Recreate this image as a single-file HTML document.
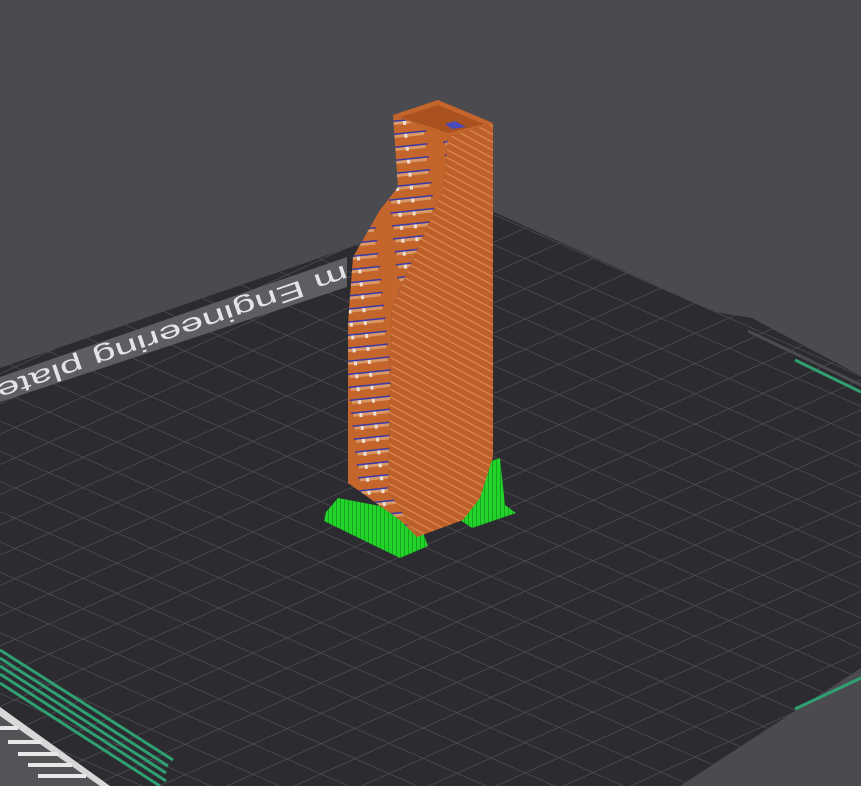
<!DOCTYPE html>
<html><head><meta charset="utf-8"><style>
html,body{margin:0;padding:0;background:#4b4a4f;overflow:hidden;width:861px;height:786px}
svg{display:block}
</style></head><body>
<svg width="861" height="786" viewBox="0 0 861 786" xmlns="http://www.w3.org/2000/svg">
<defs>
<pattern id="grid" width="20" height="20" patternUnits="userSpaceOnUse">
<path d="M0 0H20M0 0V20" stroke="#535258" stroke-width="0.9" fill="none"/>
</pattern>
<pattern id="diag" width="7" height="7" patternUnits="userSpaceOnUse" patternTransform="rotate(-62)">
<rect width="7" height="7" fill="#bd5f28"/>
<rect width="1.3" height="7" fill="#d8874c"/>
</pattern>
<pattern id="win" width="60" height="13" patternUnits="userSpaceOnUse" patternTransform="rotate(-6)">
<rect width="60" height="13" fill="#c4652b"/>
<rect x="6" y="5" width="44" height="1.5" fill="#3838a8"/>
<rect x="8" y="6.5" width="40" height="3" fill="#d99866"/>
<rect x="14" y="6.5" width="3" height="4" fill="#f0e0d0"/>
<rect x="28" y="6.5" width="3" height="4" fill="#f0e0d0"/>
</pattern>
<pattern id="grn" width="4" height="4" patternUnits="userSpaceOnUse">
<rect width="4" height="4" fill="#22d32a"/>
<rect width="1" height="4" fill="#18a41f"/>
</pattern>
<clipPath id="pc"><polygon points="0,368 476,204 715,312 752,318 861,376 861,668 680,786 110,786 0,707"/></clipPath>
</defs>
<rect width="861" height="786" fill="#4b4a4f"/>
<!-- plate -->
<polygon points="0,368 476,204 715,312 752,318 861,376 861,668 680,786 110,786 0,707" fill="#2c2b30"/>
<g clip-path="url(#pc)">
<g transform="matrix(-1.7 0.765 1.7 0.748 423 183)">
<rect x="-100" y="-100" width="700" height="700" fill="url(#grid)"/>
</g>
</g>
<!-- text band -->
<polygon points="0,377 347,257 347,287 0,402" fill="#5e5e62"/>
<text x="0" y="0" transform="translate(172,331) rotate(161)" font-family="Liberation Sans, sans-serif" font-size="24" fill="#e4e4e6" text-anchor="middle" dominant-baseline="middle" textLength="370" lengthAdjust="spacingAndGlyphs">m Engineering plate</text>
<!-- right edge strip -->
<line x1="748" y1="331" x2="861" y2="385" stroke="#4a4a4f" stroke-width="3"/>
<line x1="795" y1="360" x2="861" y2="392" stroke="#2fa070" stroke-width="3"/>
<line x1="795" y1="709" x2="861" y2="678" stroke="#2fa070" stroke-width="3"/>
<!-- bottom left corner -->
<polygon points="0,707 110,786 0,786" fill="#545358"/>
<polygon points="0,707 110,786 100,786 0,716" fill="#d8d8d8"/>
<g stroke="#e8e8e8" stroke-width="4">
<line x1="0" y1="728" x2="18" y2="728"/><line x1="8" y1="742" x2="42" y2="742"/>
<line x1="18" y1="754" x2="58" y2="754"/><line x1="28" y1="765" x2="72" y2="765"/>
<line x1="38" y1="776" x2="86" y2="776"/>
</g>
<g stroke="#2fa070" stroke-width="3">
<line x1="0" y1="650" x2="173" y2="760"/>
<line x1="0" y1="658" x2="168" y2="766"/>
<line x1="0" y1="666" x2="166" y2="773"/>
<line x1="0" y1="674" x2="166" y2="781"/>
<line x1="0" y1="683" x2="160" y2="786"/>
</g>
<!-- green supports -->
<polygon points="326,512 338,498 380,506 422,530 428,546 400,558 324,521" fill="url(#grn)"/>
<polygon points="488,462 500,458 505,505 516,513 472,528 460,520 470,505" fill="url(#grn)"/>
<!-- tower right face -->
<polygon points="448,137 493,123 493,457 480,498 463,520 417,537 388,490 392,307 420,243 443,190" fill="url(#diag)"/>
<!-- tower left face -->
<polygon points="393,115 448,137 443,190 420,243 392,307 388,490 417,537 400,520 348,483 348,323 353,257 380,210 398,187" fill="url(#win)"/>
<!-- top cap -->
<polygon points="393,115 438,100 493,123 448,137" fill="#c4652b"/>
<polygon points="400,117 438,105 484,124 448,133" fill="#a9521f"/>
<polygon points="445,124 455,121 466,127 452,129" fill="#4a4ab8"/>
</svg>
</body></html>
